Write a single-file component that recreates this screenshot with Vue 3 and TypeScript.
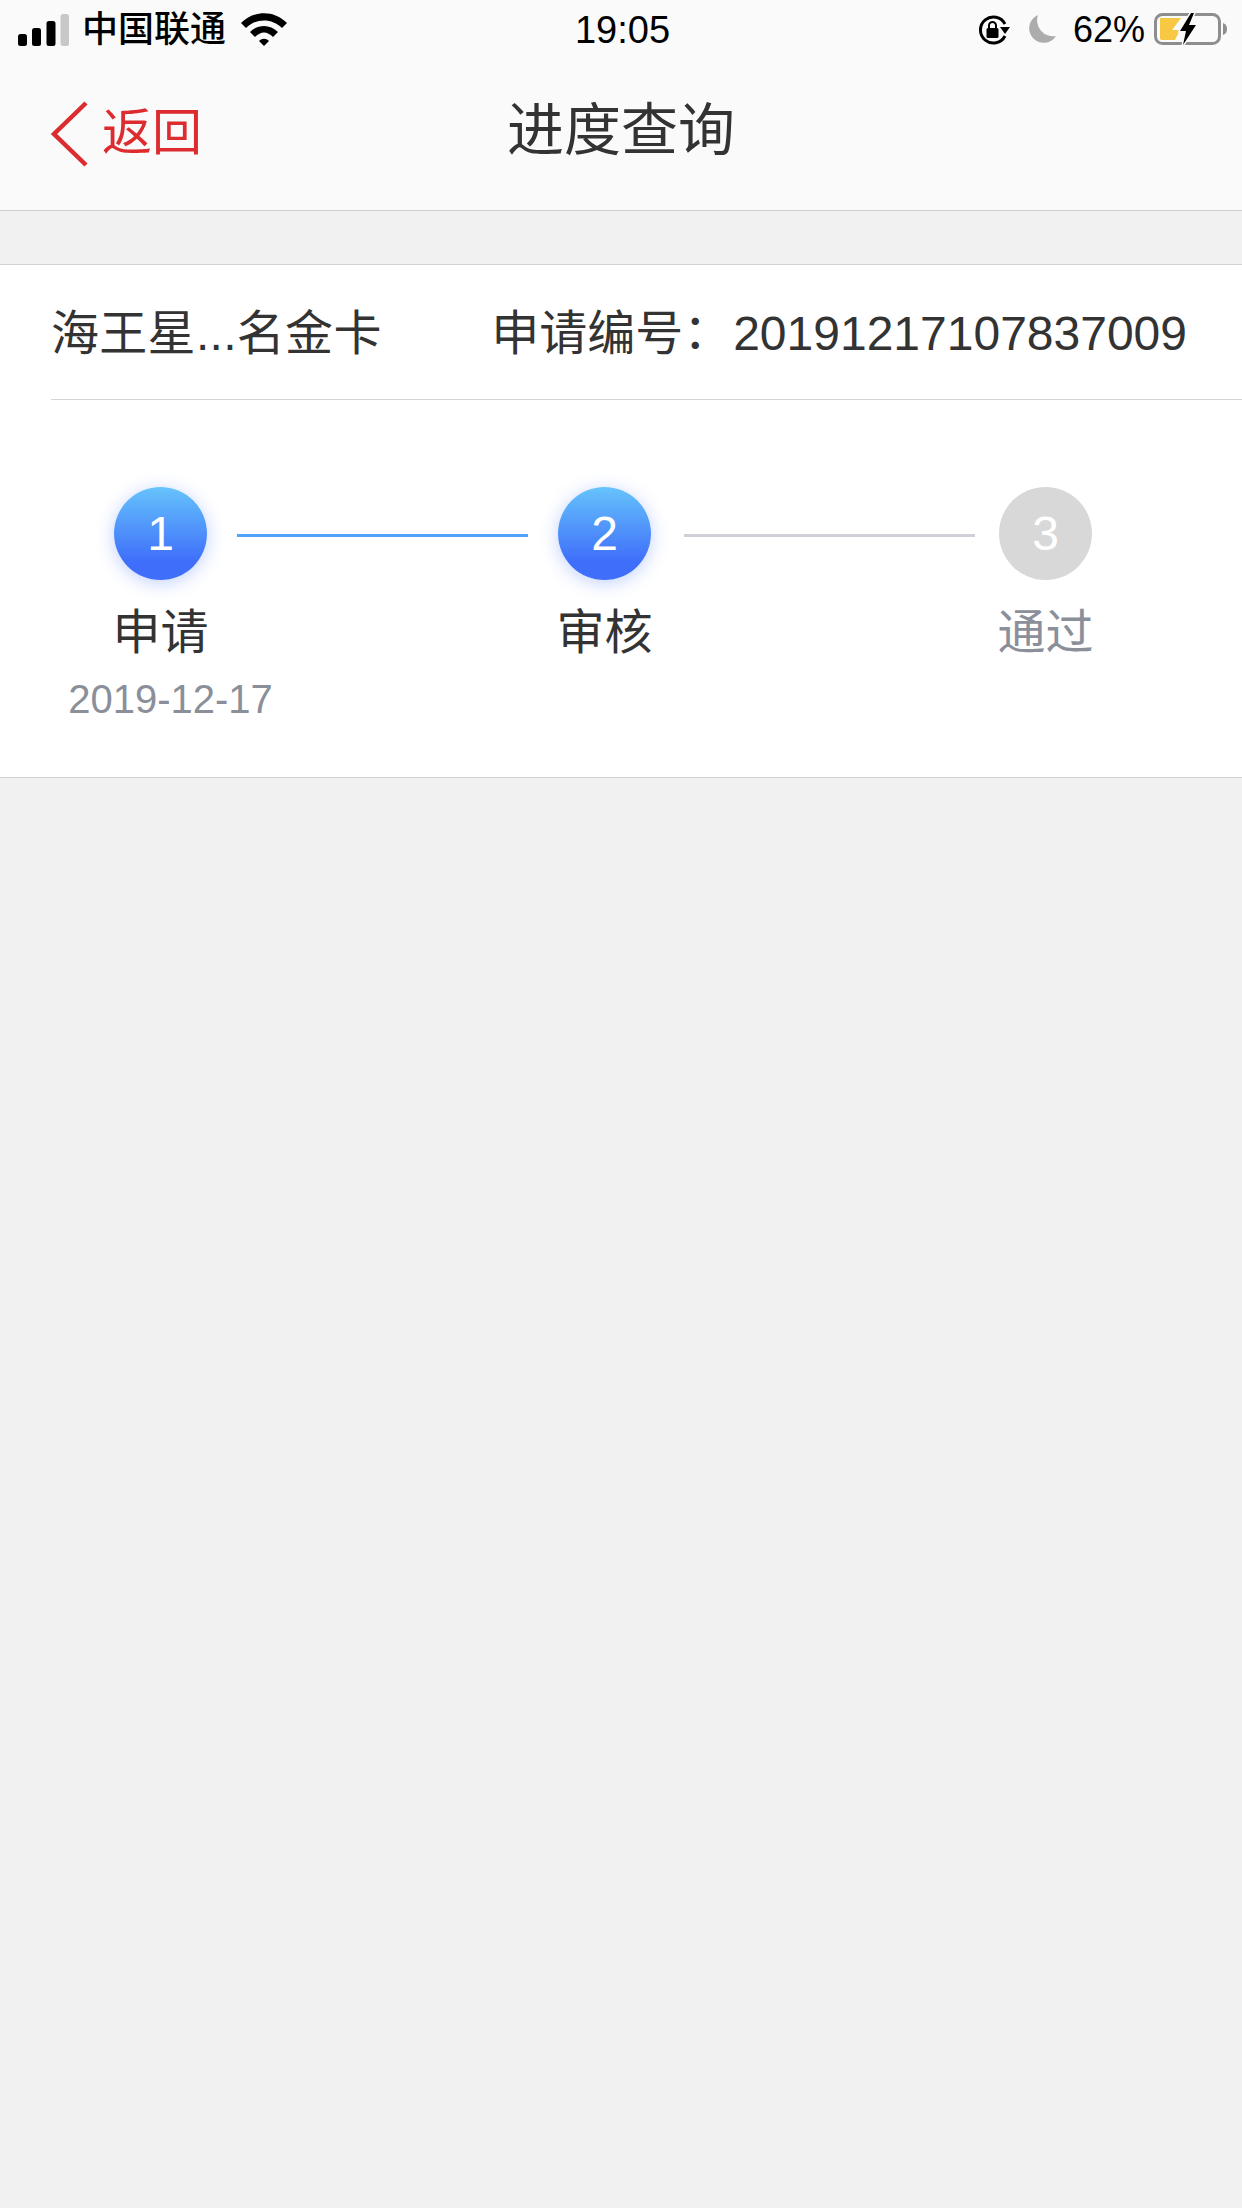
<script setup lang="ts">
interface Step { n: number; label: string; date?: string; done: boolean }
const steps: Step[] = [
  { n: 1, label: '申请', date: '2019-12-17', done: true },
  { n: 2, label: '审核', done: true },
  { n: 3, label: '通过', done: false },
]
</script>

<template>
  <div class="page">
    <header class="top">
      <div class="status">
        <div class="st-left">
          <svg class="signal" width="51" height="32" viewBox="0 0 51 32">
            <rect x="0" y="20" width="9" height="12" rx="2.500" fill="#000" />
            <rect x="14" y="14" width="9" height="18" rx="2.500" fill="#000" />
            <rect x="28.500" y="7" width="9" height="25" rx="2.500" fill="#000" />
            <rect x="42.500" y="0" width="8.500" height="32" rx="2.500" fill="#c8c8c8" />
          </svg>
          <span class="carrier">中国联通</span>
          <svg class="wifi" width="46" height="34" viewBox="0 0 46 34">
            <path d="M0 10 C13 -3 33 -3 46 10 L41 15 C31 5 15 5 5 15Z" fill="#000" />
            <path d="M9 19 C17 11 29 11 37 19 L32 24 C26 18 20 18 14 24Z" fill="#000" />
            <path d="M18 28 C21 25 25 25 28 28 L23 33Z" fill="#000" />
          </svg>
        </div>
        <span class="time">19:05</span>
        <div class="st-right">
          <svg width="32" height="30" viewBox="0 0 32 30">
            <path d="M27 21 A13 13 0 1 1 27 9" fill="none" stroke="#000" stroke-width="3" />
            <path d="M22 12 L32 12 L27 19Z" fill="#000" />
            <rect x="8.500" y="13" width="12" height="10" rx="1.500" fill="#000" />
            <path d="M11 13 V10.500 A3.500 3.500 0 0 1 18 10.500 V13" fill="none" stroke="#000" stroke-width="2" />
          </svg>
          <svg class="moon" width="28" height="28" viewBox="0 0 28 28">
            <path d="M10 0 A14.500 14.500 0 1 0 28 21 A16 16 0 0 1 10 0Z" fill="#acacac" />
          </svg>
          <span class="pct">62%</span>
          <svg class="battery" width="74" height="34" viewBox="0 0 74 34">
            <rect x="2.500" y="2.500" width="64" height="29" rx="7" fill="none" stroke="#8e8e8e" stroke-width="3" />
            <path d="M70 11 C73 12 74 14 74 17 C74 20 73 22 70 23Z" fill="#8e8e8e" />
            <path d="M7 6 H28 L19 18 H27 L22 28 H9 Q7 28 7 26Z" fill="#f7c841" />
            <path d="M38 1 L27 19 H33 L30 33 L43 13 H36 L41 1Z" fill="#000" stroke="#fafafa" stroke-width="3" paint-order="stroke" />
          </svg>
        </div>
      </div>
      <nav class="nav">
        <div class="back">
          <svg width="40" height="68" viewBox="0 0 40 68">
            <path d="M37 3 L5 34 L37 65" fill="none" stroke="#dc2c2f" stroke-width="4.500" />
          </svg>
          <span>返回</span>
        </div>
        <h1 class="title">进度查询</h1>
      </nav>
    </header>

    <section class="card">
      <div class="info">
        <span class="name">海王星...名金卡</span>
        <span class="number">申请编号<span class="colon">：</span><span class="digits">20191217107837009</span></span>
      </div>
      <div class="steps">
        <template v-for="(s, i) in steps" :key="s.n">
          <div class="step" :class="{ off: !s.done }">
            <div class="dot">{{ s.n }}</div>
            <div class="label">{{ s.label }}</div>
            <div v-if="s.date" class="date">{{ s.date }}</div>
          </div>
          <div v-if="i < steps.length - 1" class="line" :class="[`line${i + 1}`, { on: i === 0 }]"></div>
        </template>
      </div>
    </section>
  </div>
</template>

<style>
html, body { margin: 0; background: #f1f1f2; }
</style>

<style scoped>
.page {
  width: 1242px;
  height: 2208px;
  background: #f1f1f2;
  font-family: "Liberation Sans", "Noto Sans CJK SC", sans-serif;
  overflow: hidden;
}
.top {
  height: 210px;
  background: #fafafa;
  border-bottom: 1px solid #cfcfd1;
}
.status {
  height: 60px;
  padding: 0 15px 0 18px;
  display: grid;
  grid-template-columns: 1fr auto 1fr;
  align-items: center;
  color: #000;
}
.st-left { display: flex; align-items: center; }
.carrier { font-size: 36px; line-height: 36px; margin: -1px 0 0 13px; font-weight: 500; white-space: nowrap; }
.wifi { margin: -1px 0 0 15px; }
.time { font-size: 38px; }
.st-right { display: flex; align-items: center; justify-content: flex-end; }
.moon { margin: -2px 0 0 18px; }
.pct { font-size: 36px; margin-left: 17px; }
.battery { margin: -2px 0 0 8px; }
.nav {
  height: 140px;
  padding-bottom: 10px;
  display: grid;
  grid-template-columns: 1fr auto 1fr;
  align-items: center;
}
.back {
  margin: 7px 0 0 49px;
  display: flex;
  align-items: center;
  color: #dc2c2f;
  font-size: 50px;
}
.back span { margin: -1px 0 0 13px; line-height: 60px; }
.title { margin: 0; font-size: 57px; line-height: 70px; font-weight: 400; color: #333; }
.card {
  margin-top: 53px;
  height: 512px;
  background: #fff;
  border-top: 1px solid #d2d2d4;
  border-bottom: 1px solid #d2d2d4;
}
.info {
  margin-left: 51px;
  height: 135px;
  padding: 0 55px 6px 0;
  box-sizing: border-box;
  border-bottom: 1px solid #d5d5d7;
  display: flex;
  align-items: center;
  justify-content: space-between;
  color: #333;
  font-size: 48px;
}
.colon {
  line-height: 1;
  vertical-align: 2px;
  margin-right: 2px;
}
.name { letter-spacing: 0.3px; }
.steps {
  position: relative;
  height: 377px;
}
.step {
  position: absolute;
  top: 87px;
  width: 93px;
  display: flex;
  flex-direction: column;
  align-items: center;
}
.step:nth-of-type(1) { left: 114px; }
.step:nth-of-type(3) { left: 558px; }
.step:nth-of-type(5) { left: 999px; }
.dot {
  width: 93px;
  height: 93px;
  border-radius: 50%;
  background: linear-gradient(180deg, #66c3fc 0%, #3f6ffa 80%);
  box-shadow: 0 3px 18px rgba(63, 111, 250, 0.32);
  color: #fff;
  font-size: 48px;
  display: flex;
  align-items: center;
  justify-content: center;
}
.label {
  margin-top: 23px;
  font-size: 48px;
  line-height: 60px;
  color: #333;
  white-space: nowrap;
}
.date {
  margin-top: 14px;
  margin-left: 20px;
  font-size: 40px;
  line-height: 44px;
  color: #8b8f9a;
  white-space: nowrap;
}
.off .dot { background: #d8d8d8; box-shadow: none; }
.off .label { color: #8b8f9a; }
.line {
  position: absolute;
  top: 134px;
  height: 3px;
  background: #cfd0d8;
}
.line.on { background: #51a2fb; }
.line1 { left: 237px; width: 291px; }
.line2 { left: 684px; width: 291px; }
</style>
